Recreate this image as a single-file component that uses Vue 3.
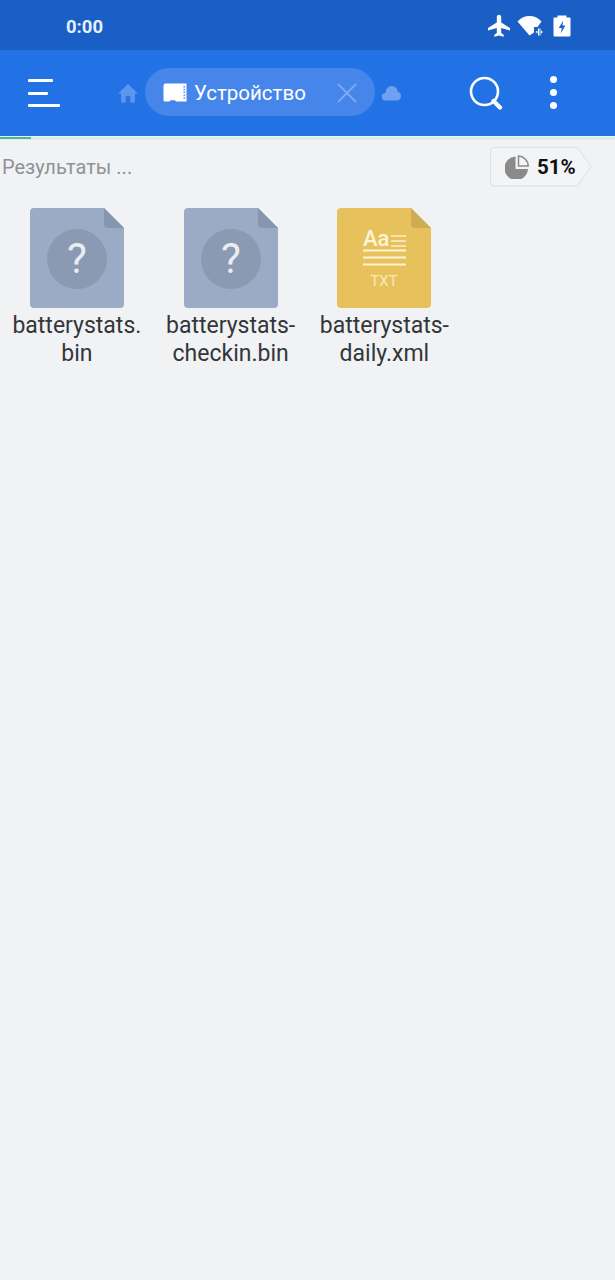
<template>
  <div class="screen">
    <div class="status-bar">
      <span class="clock">0:00</span>
      <div class="status-icons">
        <svg class="ic-plane" width="24" height="24" viewBox="0 0 24 24">
          <path fill="#fff" d="M9.800 3c0-1.200 1-2.200 2.200-2.200s2.200 1 2.200 2.200v5.500l8.800 5.500v2.600l-8.800-2.700v5l2.500 1.800v2L12 21.400l-4.700 1.300v-2l2.500-1.800v-5L1 16.600V14l8.800-5.500z" />
        </svg>
        <svg class="ic-wifi" width="27" height="22" viewBox="0 0 27 22">
          <path fill="#fff" d="M.5 6.500C4 2.800 8 1 12.500 1s8.500 1.800 12 5.500L20.500 12H17v5.500L12.500 20.500z" />
          <path fill="#fff" d="M21 13.500h1v7h-1zM22.500 13.500h1v7h-1zM20.500 15.500v3L18.500 17zM24 15.500v3l2 -1.500z" />
        </svg>
        <svg class="ic-battery" width="18" height="22" viewBox="0 0 18 22">
          <path fill="#fff" d="M4.500 .5h9v2h3a1 1 0 0 1 1 1v17a1 1 0 0 1-1 1H1.500a1 1 0 0 1-1-1v-17a1 1 0 0 1 1-1h3z" />
          <path fill="#1b60c6" d="M10.200 5.500 5.800 13h3L7.800 18.500l4.600-8H9.400z" />
        </svg>
      </div>
    </div>

    <div class="toolbar">
      <button class="menu-btn" aria-label="Меню">
        <i class="line l1"></i>
        <i class="line l2"></i>
        <i class="line l3"></i>
      </button>
      <svg class="ic-home" width="20" height="20" viewBox="0 0 20 20">
        <path fill="#5b95ee" d="M10 1 0 10.400h3V19.500h4.800v-6.200h4.400v6.200H17V10.400h3z" />
      </svg>
      <div class="pill">
        <svg class="ic-sd" width="24" height="20" viewBox="0 0 24 20">
          <path fill="#fff" d="M2.500 .5H23.500V18.500H13l-1-1.300H7.500l-1 1.300H2a1.500 1.500 0 0 1-1.500-1.500V2.500a2 2 0 0 1 2-2z" />
          <path fill="#5b95ee" d="M20.500 3h1.600v1.500h-1.600zM20.500 5.800h1.600v1.500h-1.600zM20.500 8.600h1.600v1.500h-1.600zM20.500 11.400h1.600v1.500h-1.600zM20.500 14.200h1.600v1.500h-1.600z" />
        </svg>
        <span class="pill-text">Устройство</span>
        <svg class="ic-close" width="20" height="20" viewBox="0 0 20 20">
          <path d="M1 1l18 18M19 1 1 19" stroke="#86b1f2" stroke-width="1.700" fill="none" />
        </svg>
      </div>
      <svg class="ic-cloud" width="20" height="16" viewBox="0 0 20 16">
        <path fill="#6ea2f0" d="M4 15.500A3.900 3.900 0 0 1 3.600 7.700 6.300 6.300 0 0 1 10 1a5.800 5.800 0 0 1 5.800 5.800A4.500 4.500 0 0 1 15.500 15.500z" />
      </svg>
      <svg class="ic-search" width="34" height="34" viewBox="0 0 34 34">
        <circle cx="15.500" cy="15.500" r="13.500" fill="none" stroke="#fff" stroke-width="2.600" />
        <path d="M24.500 25 31 31.500" stroke="#fff" stroke-width="4.200" stroke-linecap="round" />
      </svg>
      <div class="dots">
        <i></i><i></i><i></i>
      </div>
    </div>

    <div class="progress"><div class="progress-fill"></div></div>

    <div class="info-row">
      <span class="results">Результаты ...</span>
      <div class="badge">
        <svg class="badge-bg" width="102" height="40" viewBox="0 0 102 40">
          <path d="M4 .5H87.500L101 19.500 87.500 39H4A3.500 3.500 0 0 1 .5 35.500V4A3.500 3.500 0 0 1 4 .5z" fill="#f3f4f6" stroke="#dcdfe3" />
        </svg>
        <svg class="ic-pie" width="24" height="24" viewBox="0 0 24 24">
          <path fill="#8a8a8a" d="M10.500 1.500v12.500H23A11.800 11.800 0 1 1 10.500 1.500z" />
          <path fill="none" stroke="#8a8a8a" stroke-width="1.500" d="M13.500 1C18.500 1 23.200 5.500 23.200 11H13.500z" />
        </svg>
        <span class="badge-text">51%</span>
      </div>
    </div>

    <div class="grid">
      <div v-for="f in files" :key="f.name" class="file">
        <svg class="file-icon" width="94" height="100" viewBox="0 0 94 100">
          <path :fill="f.color" d="M4 0H74L94 20V96a4 4 0 0 1-4 4H4a4 4 0 0 1-4-4V4a4 4 0 0 1 4-4z" />
          <path :fill="f.fold" d="M74 0 94 20H78a4 4 0 0 1-4-4z" />
          <template v-if="f.type === 'unknown'">
            <circle cx="47" cy="51" r="30" fill="#8a9ab2" />
            <text x="47" y="65" text-anchor="middle" class="q-mark">?</text>
          </template>
          <template v-else>
            <text x="26" y="38" class="aa">Aa</text>
            <path d="M54 28h15M54 33h15M54 38h15" stroke="#fbeecb" stroke-width="1.500" />
            <path d="M26 42.500h43M26 49.500h43M26 56.500h43" stroke="#fdf3d8" stroke-width="2" />
            <text x="47" y="78" text-anchor="middle" class="txt">TXT</text>
          </template>
        </svg>
        <div class="file-name">
          <span v-for="l in f.lines" :key="l">{{ l }}</span>
        </div>
      </div>
    </div>
  </div>
</template>

<script setup>
const files = [
  { name: 'batterystats.bin', lines: ['batterystats.', 'bin'], type: 'unknown', color: '#9babc5', fold: '#8696ae' },
  { name: 'batterystats-checkin.bin', lines: ['batterystats-', 'checkin.bin'], type: 'unknown', color: '#9babc5', fold: '#8696ae' },
  { name: 'batterystats-daily.xml', lines: ['batterystats-', 'daily.xml'], type: 'text', color: '#e7c25c', fold: '#cfab55' }
];
</script>

<style>
html,
body {
  margin: 0;
  background: #f1f2f4;
}
</style>

<style scoped>
.screen {
  width: 615px;
  height: 1280px;
  background: #f1f2f4;
  font-family: Roboto, "Noto Sans", sans-serif;
  overflow: hidden;
}

.status-bar {
  height: 50px;
  background: #1a5fc6;
  display: flex;
  align-items: center;
  justify-content: space-between;
  box-sizing: border-box;
  padding: 4px 44px 0 66px;
}

.clock {
  color: #e6f0fd;
  font-size: 18.500px;
  font-weight: 700;
}

.status-icons {
  display: flex;
  align-items: center;
  margin-top: -3px;
}

.ic-plane {
  margin-right: -1px;
}

.ic-wifi {
  margin-left: 7px;
}

.ic-battery {
  margin-left: 9px;
}

.toolbar {
  height: 86px;
  background: #2272e6;
  display: flex;
  align-items: center;
}

.menu-btn {
  width: 33px;
  height: 28px;
  margin-left: 28px;
  padding: 0;
  border: 0;
  background: none;
  display: flex;
  flex-direction: column;
  justify-content: space-between;
}

.line {
  display: block;
  height: 3px;
  background: #fff;
  border-radius: 1px;
}

.l1 {
  width: 25px;
}

.l2 {
  width: 20px;
}

.l3 {
  width: 32px;
}

.ic-home {
  margin-left: 57px;
}

.pill {
  width: 230px;
  height: 48px;
  margin: -2px 0 0 7px;
  background: #4686ea;
  border-radius: 24px;
  display: flex;
  align-items: center;
  box-sizing: border-box;
  padding: 2px 18px 0;
}

.pill-text {
  color: #fff;
  font-size: 20.500px;
  margin-left: 7px;
}

.ic-close {
  margin-left: auto;
}

.ic-cloud {
  margin-left: 7px;
}

.ic-search {
  margin-left: 67px;
}

.dots {
  margin: -2px 0 0 47px;
  display: flex;
  flex-direction: column;
  gap: 6px;
}

.dots i {
  display: block;
  width: 7px;
  height: 7px;
  border-radius: 50%;
  background: #fff;
}

.progress {
  height: 3px;
  background: #d9ecea;
}

.progress-fill {
  width: 31px;
  height: 2px;
  margin-top: 1px;
  background: #4cb79b;
}

.info-row {
  display: flex;
  align-items: center;
  justify-content: space-between;
  height: 68px;
  padding: 0 23px 15px 2px;
  box-sizing: border-box;
}

.results {
  color: #8f9296;
  font-size: 20px;
}

.badge {
  position: relative;
  width: 102px;
  height: 40px;
  display: flex;
  align-items: center;
  box-sizing: border-box;
  padding-left: 15px;
}

.badge-bg {
  position: absolute;
  left: 0;
  top: 0;
}

.ic-pie,
.badge-text {
  position: relative;
}

.badge-text {
  margin-left: 8px;
  font-size: 20.500px;
  font-weight: 700;
  color: #111;
}

.grid {
  display: grid;
  grid-template-columns: repeat(4, 153.750px);
}

.file {
  display: flex;
  flex-direction: column;
  align-items: center;
}

.file-name {
  margin-top: 4px;
  display: flex;
  flex-direction: column;
  align-items: center;
  color: #33363a;
  font-size: 23px;
  line-height: 28px;
  white-space: nowrap;
}

.q-mark {
  font-family: Roboto, sans-serif;
  font-size: 42px;
  font-weight: 400;
  fill: #e9ecf1;
}

.aa {
  font-family: Roboto, sans-serif;
  font-size: 22px;
  font-weight: 500;
  fill: #fdf3d8;
}

.txt {
  font-family: Roboto, sans-serif;
  font-size: 15px;
  fill: #f8e9bd;
}
</style>
